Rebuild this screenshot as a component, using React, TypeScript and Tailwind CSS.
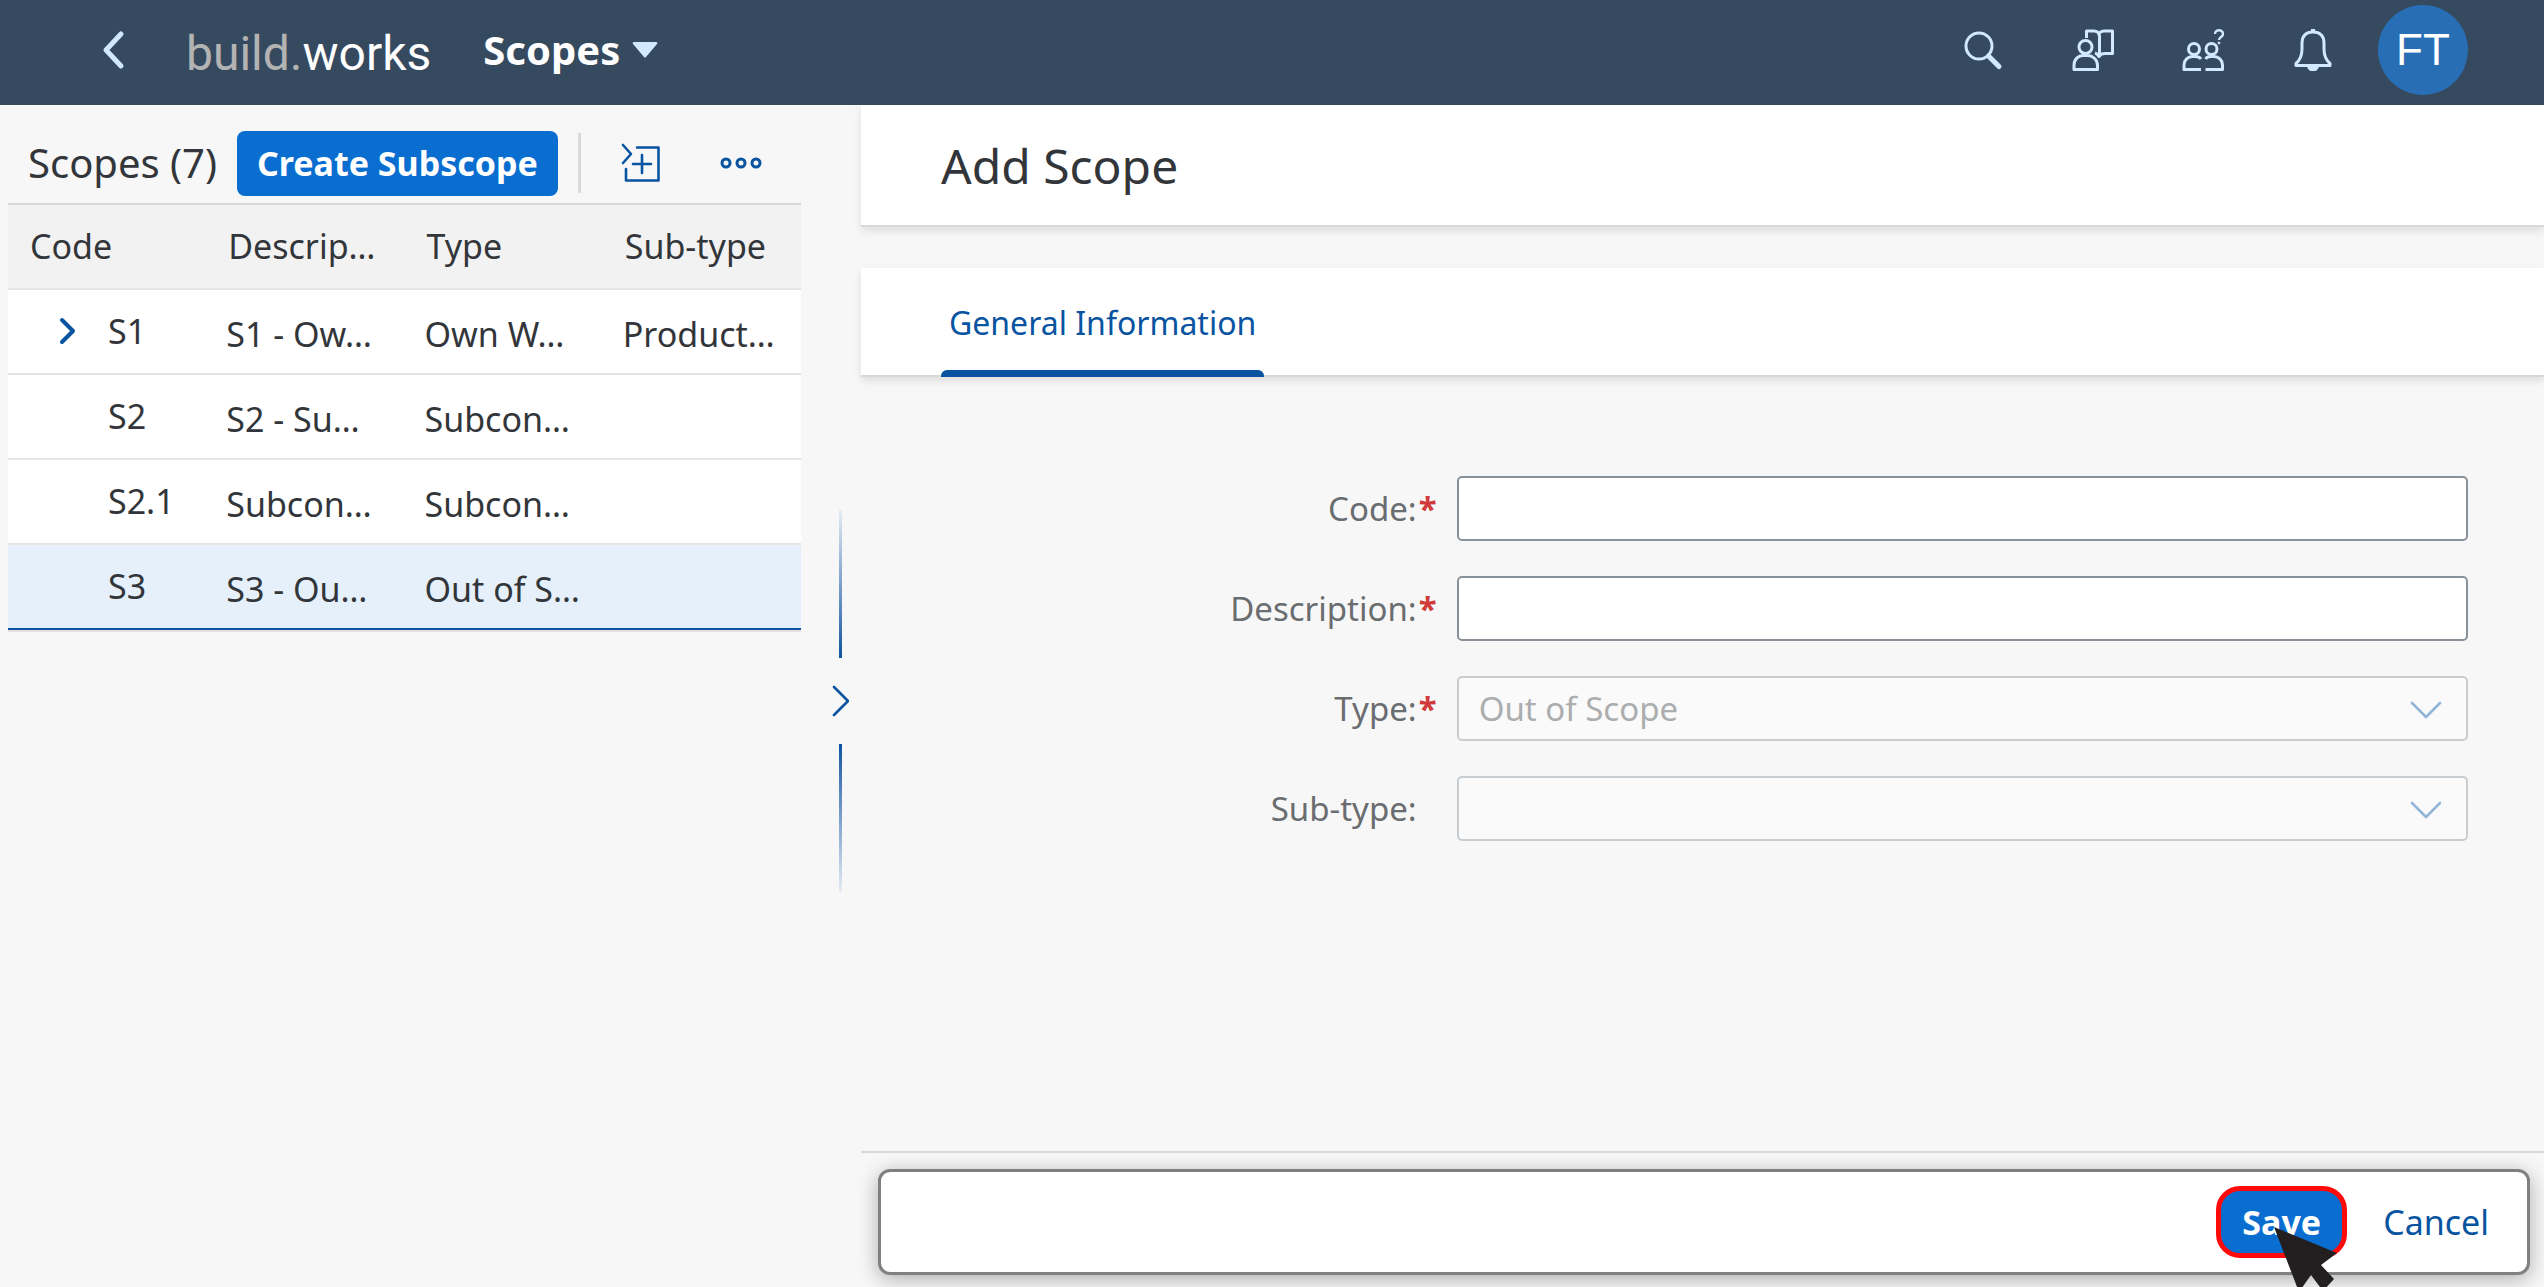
import React, { useState } from "react";
import clsx from "clsx";

const scopes = [
  { code: "S1", description: "S1 - Ow…", type: "Own W…", subType: "Product…", expandable: true },
  { code: "S2", description: "S2 - Su…", type: "Subcon…", subType: "" },
  { code: "S2.1", description: "Subcon…", type: "Subcon…", subType: "" },
  { code: "S3", description: "S3 - Ou…", type: "Out of S…", subType: "" },
];

function Header() {
  return (
    <header className="flex h-[105px] items-center bg-[#364a5f] pr-[76px] pb-1.5 pl-[91px] text-[#d1e8ff]">
      <button aria-label="Back" className="p-2.5">
        <svg width="24" height="40" viewBox="0 0 24 40" fill="none" stroke="currentColor" strokeWidth="5" strokeLinecap="round" strokeLinejoin="round">
          <path d="M20 4 5 20l15 16" />
        </svg>
      </button>
      <a
        href="#"
        className="ml-[51px] pt-2 font-['Roboto',sans-serif] text-5xl text-white"
      >
        <span className="text-[#b3b3b3]">build.</span>works
      </a>
      <button className="ml-[52px] flex items-center gap-3 text-[40px] leading-none font-bold text-white">
        Scopes
        <svg width="26" height="16" viewBox="0 0 26 16" fill="#d1e8ff">
          <path d="M2 0h22q2 0 1 2L14 15q-1 1-2 0L1 2Q0 0 2 0Z" />
        </svg>
      </button>
      <div className="ml-auto flex items-center gap-[68px]">
        <button aria-label="Search">
          <svg width="42" height="42" viewBox="0 0 42 42" fill="none" stroke="currentColor" strokeWidth="3">
            <circle cx="17" cy="17" r="13" />
            <path d="M26.500 27 37 37.500" strokeWidth="5" strokeLinecap="round" />
          </svg>
        </button>
        <button aria-label="Learning">
          <svg width="42" height="42" viewBox="0 0 42 42" fill="none" stroke="currentColor" strokeWidth="3" strokeLinejoin="round">
            <circle cx="13.500" cy="18" r="6.500" />
            <path d="M2 40.500v-4c0-7 5-10 9-10h4.500c5 0 10 4 10 10v4Z" />
            <path d="M14.500 9V2H22c3 0 5 2 5 4 0-2 2-4 5-4h8.500v22.500H33c-3 0-5 1-6 3-1-2-2-3-4-3.500M27.500 6v20" />
          </svg>
        </button>
        <button aria-label="Community help">
          <svg width="42" height="42" viewBox="0 0 42 42" fill="none" stroke="currentColor" strokeWidth="3" strokeLinejoin="round">
            <circle cx="12" cy="20" r="5.500" />
            <path d="M19 40.500H2V36c0-5 4-8.500 8.500-8.500H13c3 0 5 1 6 2.500" />
            <circle cx="29.500" cy="20" r="5.500" />
            <path d="M23.500 30c1-1.500 3-2.500 5-2.500H32c4.500 0 8.500 3.500 8.500 8.500v4.500h-17" />
            <path d="M33 5c0-5 8-5 8 0 0 3-4 3-4 6" strokeWidth="2.400" />
            <circle cx="37" cy="14" r="1" fill="currentColor" strokeWidth="1" />
          </svg>
        </button>
        <button aria-label="Notifications">
          <svg width="42" height="42" viewBox="0 0 42 42" fill="none" stroke="currentColor" strokeWidth="3" strokeLinejoin="round">
            <path d="M21 3c7 0 11 4 11 11v6c0 7 2 11 6 14.500V36.500H4V34.500c4-3.500 6-7.500 6-14.500v-6C10 7 14 3 21 3Z" />
            <path d="M15 36.500a6 6 0 0 0 12 0Z" fill="currentColor" strokeWidth="0" />
            <path d="M21 0v4" strokeWidth="4" />
          </svg>
        </button>
      </div>
      <button className="ml-11 flex size-[90px] items-center justify-center rounded-full bg-[#286eb4] font-['Liberation_Sans',sans-serif] text-[44px] text-white">
        FT
      </button>
    </header>
  );
}

function ScopeList() {
  const [selected, setSelected] = useState("S3");
  const headCell = "px-[22px] pb-0.5 text-left font-normal";
  const cell = "px-5 pt-1 whitespace-nowrap";

  return (
    <section className="flex-1 pl-2">
      <div className="flex h-[98px] items-center pt-[18px] pl-5">
        <h2 className="text-[40px] leading-none whitespace-nowrap">Scopes (7)</h2>
        <button className="ml-5 h-[65px] rounded-lg bg-[#0a6ed1] px-5 text-[34px] font-bold whitespace-nowrap text-white">
          Create Subscope
        </button>
        <div className="ml-5 h-[60px] w-[3px] bg-[#d9d9d9]" />
        <button aria-label="Add item" className="ml-10 text-[#0854a0]">
          <svg width="40" height="40" viewBox="0 0 40 40" fill="none" stroke="currentColor" strokeWidth="2.600" strokeLinejoin="round" strokeLinecap="round">
            <path d="m2 2 8 9-8 9M16 4.500h21.500v33H5V26M12 21h18M21 12v18" />
          </svg>
        </button>
        <button aria-label="More" className="ml-[58px] text-[#0854a0]">
          <svg width="44" height="14" viewBox="0 0 44 14" fill="none" stroke="currentColor" strokeWidth="3">
            <circle cx="7" cy="7" r="4" />
            <circle cx="22" cy="7" r="4" />
            <circle cx="37" cy="7" r="4" />
          </svg>
        </button>
      </div>
      <table className="w-full table-fixed border-separate border-spacing-0 border-b-2 border-[#e5e0e4] text-[34px] leading-10">
        <thead>
          <tr className="h-[87px] bg-[#f2f2f2] *:border-y-2 *:border-t-[#d9d9d9] *:border-b-[#e5e5e5]">
            <th className={headCell}>Code</th>
            <th className={headCell}>Descrip…</th>
            <th className={headCell}>Type</th>
            <th className={headCell}>Sub-type</th>
          </tr>
        </thead>
        <tbody>
          {scopes.map((scope) => (
            <tr
              key={scope.code}
              onClick={() => setSelected(scope.code)}
              className={clsx(
                "h-[85px] *:border-b-2",
                scope.code === selected
                  ? "bg-[#e5f0fa] *:border-[#0854a0]"
                  : "bg-white *:border-[#e5e5e5]"
              )}
            >
              <td className="pb-0.5 pl-[50px] whitespace-nowrap">
                <div className="flex items-center gap-8">
                  <svg width="18" height="28" viewBox="0 0 18 28" fill="none" stroke="#0854a0" strokeWidth="4" strokeLinecap="round" strokeLinejoin="round">
                    {scope.expandable && <path d="m4 3 11 11L4 25" />}
                  </svg>
                  {scope.code}
                </div>
              </td>
              <td className={cell}>{scope.description}</td>
              <td className={cell}>{scope.type}</td>
              <td className={cell}>{scope.subType}</td>
            </tr>
          ))}
        </tbody>
      </table>
    </section>
  );
}

function Splitter() {
  return (
    <div className="flex w-[60px] flex-col items-center justify-center gap-[27px] pt-2.5 pl-[18px]">
      <div className="h-[148px] w-[3px] bg-linear-to-b from-[#e5ecf3] to-[#0854a0]" />
      <button aria-label="Expand list">
        <svg width="18" height="32" viewBox="0 0 18 32" fill="none" stroke="#0854a0" strokeWidth="2.600" strokeLinecap="round" strokeLinejoin="round">
          <path d="m3 2 14 14L3 30" />
        </svg>
      </button>
      <div className="h-[148px] w-[3px] bg-linear-to-b from-[#0854a0] to-[#e5ecf3]" />
    </div>
  );
}

function Label({ id, required, children }: { id: string; required?: boolean; children: React.ReactNode }) {
  return (
    <label htmlFor={id} className="flex items-center justify-end pr-2.5 text-[33px] text-[#6a6d70]">
      {children}:
      <span className="w-5 text-right leading-8 font-bold text-[#d03a3a]">{required && "*"}</span>
    </label>
  );
}

function DisabledSelect({ id, value }: { id: string; value: string }) {
  return (
    <div className="relative">
      <select
        id={id}
        disabled
        className="h-[65px] w-full appearance-none rounded-[5px] border-2 border-[#c8cdd2] bg-[#fafafa] px-5 text-[33px] text-[#acadae] opacity-100"
      >
        <option>{value}</option>
      </select>
      <svg className="pointer-events-none absolute top-6 right-6" width="36" height="20" viewBox="0 0 36 20" fill="none" stroke="#93b6d8" strokeWidth="2.600" strokeLinecap="round" strokeLinejoin="round">
        <path d="m4 3 14 14L32 3" />
      </svg>
    </div>
  );
}

function AddScope() {
  const input = "h-[65px] w-full rounded-[5px] border-2 border-[#89919a] bg-white px-5 text-[33px] outline-none";

  return (
    <main className="flex min-w-0 flex-1 flex-col">
      <div className="flex h-[122px] items-center border-b-2 border-[#d9d9d9] bg-white pt-0.5 pl-20 shadow-[0_4px_8px_rgba(0,0,0,0.1)]">
        <h1 className="text-5xl">Add Scope</h1>
      </div>
      <nav className="mt-[41px] flex h-[109px] border-b-2 border-[#d9d9d9] bg-white pl-20 shadow-[0_4px_8px_rgba(0,0,0,0.1)]">
        <button className="relative px-2 pt-0.5 text-[32px] text-[#0854a0]">
          General Information
          <span className="absolute inset-x-0 -bottom-0.5 h-[7px] rounded-t-md bg-[#0854a0]" />
        </button>
      </nav>
      <form
        onSubmit={(e) => e.preventDefault()}
        className="flex flex-1 flex-col pt-[99px] text-[34px]"
      >
        <div className="grid grid-cols-[1fr_2fr] gap-x-2.5 gap-y-[35px] pr-[76px] pl-20">
          <Label id="code" required>Code</Label>
          <input id="code" type="text" className={input} />
          <Label id="description" required>Description</Label>
          <input id="description" type="text" className={input} />
          <Label id="type" required>Type</Label>
          <DisabledSelect id="type" value="Out of Scope" />
          <Label id="subtype">Sub-type</Label>
          <DisabledSelect id="subtype" value="" />
        </div>
        <div className="mt-auto border-t-2 border-[#d9d9d9] pt-4 pr-3.5 pb-3 pl-[17px]">
          <div className="flex h-[106px] items-center justify-end rounded-xl border-[3px] border-[#808080] bg-white pr-[38px] shadow-[0_4px_20px_rgba(0,0,0,0.3)]">
            <button
              type="submit"
              className="relative h-[72px] rounded-3xl border-[5px] border-[#ff0a0a] bg-[#0a6ed1] px-[21px] font-bold text-white"
            >
              Save
              <svg className="absolute top-9 left-[53px]" width="66" height="76" viewBox="0 0 66 76" fill="#231f20">
                <path d="M0 0 63 26 47 38 60 52 49 64 37 48 25 65Z" />
              </svg>
            </button>
            <button type="button" className="ml-9 text-[#0854a0]">Cancel</button>
          </div>
        </div>
      </form>
    </main>
  );
}

export default function App() {
  return (
    <div className="flex min-h-screen flex-col overflow-hidden bg-[#f7f7f7] font-['Noto_Sans',sans-serif] text-[#32363a]">
      <Header />
      <div className="flex flex-1">
        <div className="flex w-[861px] shrink-0">
          <ScopeList />
          <Splitter />
        </div>
        <AddScope />
      </div>
    </div>
  );
}
